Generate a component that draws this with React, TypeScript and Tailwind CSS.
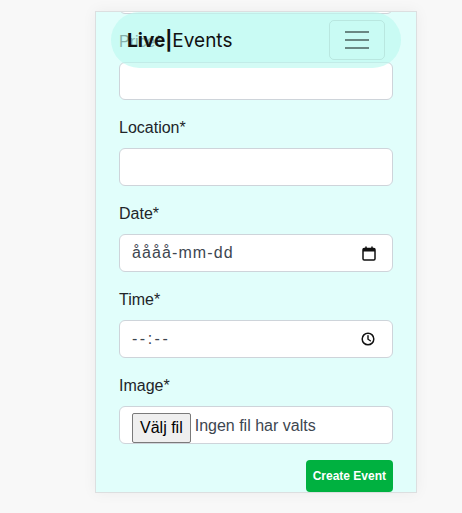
import React from "react";

const font = { fontFamily: '"Liberation Sans", Arial, sans-serif' };

function Label({ children }: { children: React.ReactNode }) {
  return (
    <label className="block text-[16px] leading-[24px] text-[#212529] mb-2 shrink-0">
      {children}
    </label>
  );
}

function TextInput() {
  return (
    <div className="h-[38px] shrink-0 rounded-[6px] border border-[#ced4da] bg-white mb-4" />
  );
}

function CalendarIcon() {
  return (
    <svg width="14" height="15" viewBox="0 0 14 15" fill="none">
      <rect x="1" y="2.5" width="12" height="11.5" rx="1.2" stroke="#111" strokeWidth="1.5" />
      <rect x="1" y="2.5" width="12" height="3" fill="#111" />
      <line x1="4" y1="0.5" x2="4" y2="3" stroke="#111" strokeWidth="1.5" />
      <line x1="10" y1="0.5" x2="10" y2="3" stroke="#111" strokeWidth="1.5" />
    </svg>
  );
}

function ClockIcon() {
  return (
    <svg width="14" height="14" viewBox="0 0 14 14" fill="none">
      <circle cx="7" cy="7" r="5.8" stroke="#111" strokeWidth="1.5" />
      <path d="M7 3.6V7.2L9.3 8.8" stroke="#111" strokeWidth="1.4" strokeLinecap="round" />
    </svg>
  );
}

export default function App() {
  return (
    <div className="relative min-h-screen bg-[#f8f8f8] pl-[95px] pt-[11px]" style={font}>
      <div className="w-[322px] h-[482px] border border-[#dcdfe0] bg-[#e1fefb] shadow-[0_0_14px_rgba(0,0,0,0.05)] overflow-hidden flex flex-col justify-end px-[23px]">
        <Label>Event name*</Label>
        <TextInput />
        <Label>Price*</Label>
        <TextInput />
        <Label>Location*</Label>
        <TextInput />
        <Label>Date*</Label>
        <div className="h-[38px] shrink-0 rounded-[6px] border border-[#ced4da] bg-white mb-4 flex items-center pl-[12px] pr-[16px] justify-between">
          <span className="text-[16px] text-[#3d4650] tracking-[1.1px]">åååå-mm-dd</span>
          <CalendarIcon />
        </div>
        <Label>Time*</Label>
        <div className="h-[38px] shrink-0 rounded-[6px] border border-[#ced4da] bg-white mb-4 flex items-center pl-[12px] pr-[17px] justify-between">
          <span className="text-[16px] text-[#3d4650] tracking-[2.5px]">--:--</span>
          <ClockIcon />
        </div>
        <Label>Image*</Label>
        <div className="h-[38px] shrink-0 rounded-[6px] border border-[#ced4da] bg-white mb-4 flex items-end pl-[12px] overflow-hidden">
          <div className="h-[30px] flex items-center px-[7px] bg-[#efefef] border border-[#7a7a7a] rounded-[2px] text-[16px] text-black">
            Välj fil
          </div>
          <span className="ml-[4px] mb-[5px] text-[16px] text-[#3d4650]">Ingen fil har valts</span>
        </div>
        <div className="flex justify-end shrink-0">
          <button className="h-[32px] px-[7px] rounded-[4px] bg-[#00b140] text-white text-[12px] font-bold leading-[18px]">
            Create Event
          </button>
        </div>
      </div>

      <nav className="absolute left-[111px] top-[12px] w-[290px] h-[56px] rounded-full bg-[rgba(187,249,239,0.65)] flex items-center justify-between pl-[16px] pr-[16px]">
        <div className="text-[19px] text-[#111] leading-none pt-[1px]" style={{ fontFamily: 'Inter, "Liberation Sans", sans-serif' }}>
          <span className="font-bold">Live|</span>
          <span>Events</span>
        </div>
        <button className="w-[56px] h-[40px] rounded-[5px] border border-[rgba(0,0,0,0.08)] flex flex-col items-center justify-center gap-[6px]">
          <span className="block w-[24px] h-[2px] bg-[#6a8783]" />
          <span className="block w-[24px] h-[2px] bg-[#6a8783]" />
          <span className="block w-[24px] h-[2px] bg-[#6a8783]" />
        </button>
      </nav>
    </div>
  );
}
